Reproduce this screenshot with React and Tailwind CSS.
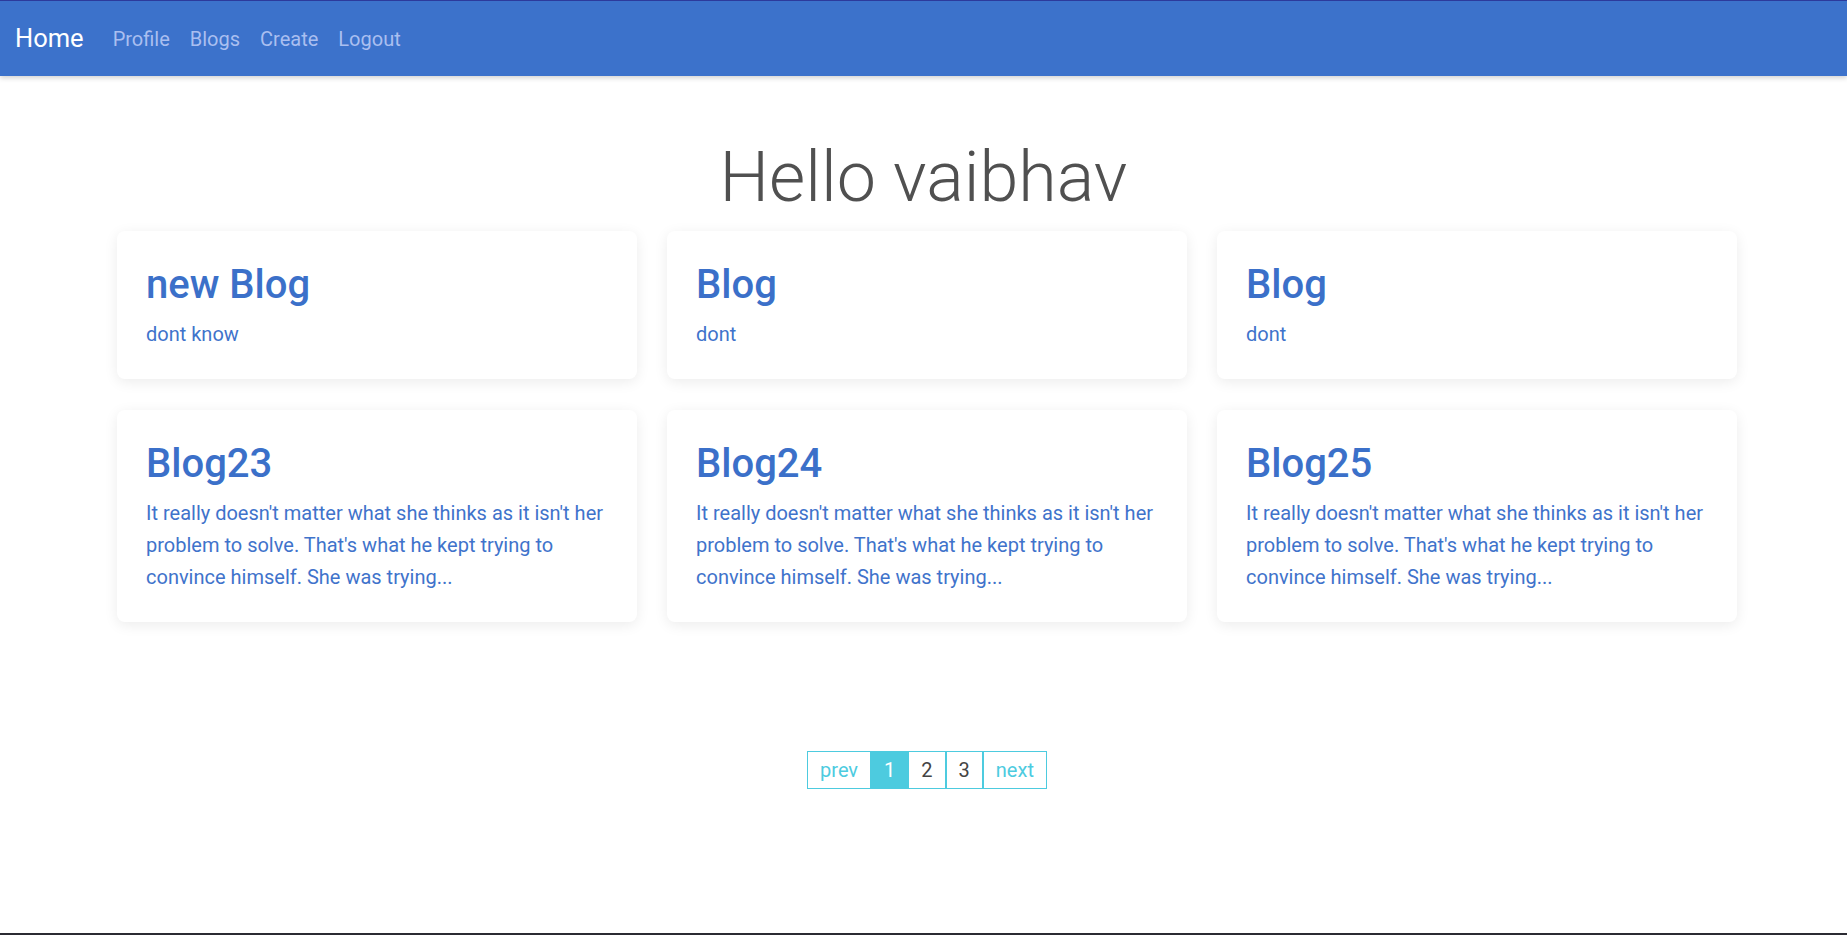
import React from "react";

const blogs = [
  { title: "new Blog", body: "dont know" },
  { title: "Blog", body: "dont" },
  { title: "Blog", body: "dont" },
  {
    title: "Blog23",
    body: "It really doesn't matter what she thinks as it isn't her problem to solve. That's what he kept trying to convince himself. She was trying...",
  },
  {
    title: "Blog24",
    body: "It really doesn't matter what she thinks as it isn't her problem to solve. That's what he kept trying to convince himself. She was trying...",
  },
  {
    title: "Blog25",
    body: "It really doesn't matter what she thinks as it isn't her problem to solve. That's what he kept trying to convince himself. She was trying...",
  },
];

const Navbar = () => (
  <nav className="h-[76px] bg-[#3c72cb] border-t border-[#2c3a9c] shadow-[0_2px_5px_rgba(0,0,0,0.18)] flex items-center relative z-10">
    <a className="ml-[15px] text-[25.5px] text-white">Home</a>
    <ul className="flex items-center ml-[19px]">
      {["Profile", "Blogs", "Create", "Logout"].map((l) => (
        <li key={l} className="px-[10px] text-[20px] text-[#aabff0]">
          {l}
        </li>
      ))}
    </ul>
  </nav>
);

const BlogCard = ({ title, body }) => (
  <div className="bg-white rounded-[8px] p-[29px] shadow-[0_3px_14px_rgba(0,0,0,0.08)]">
    <h2 className="text-[40px] font-medium leading-[49px] text-[#3b70c9] mb-[9px]">{title}</h2>
    <p className="text-[20px] leading-[32px] text-[#3f73cb]">{body}</p>
  </div>
);

const Pagination = () => {
  const items = [
    { label: "prev", cls: "text-[#4dcbdf]" },
    { label: "1", cls: "bg-[#4dcbdf] text-white" },
    { label: "2", cls: "text-[#444]" },
    { label: "3", cls: "text-[#444]" },
    { label: "next", cls: "text-[#4dcbdf]" },
  ];
  return (
    <ul className="flex justify-center mt-[129px]">
      {items.map((it) => (
        <li
          key={it.label}
          className={`border border-[#4dcbdf] px-3 text-[20px] leading-[36px] ${it.cls}`}
        >
          {it.label}
        </li>
      ))}
    </ul>
  );
};

export default function App() {
  return (
    <div className="h-[935px] flex flex-col bg-white font-['Roboto',sans-serif]">
      <Navbar />
      <main className="flex-1">
        <h1 className="mt-[59px] text-center text-[70px] font-light leading-[84px] text-[#505050]">
          Hello vaibhav
        </h1>
        <div className="w-[1620px] ml-[117px] mt-[12px]">
          <div className="grid grid-cols-3 gap-x-[30px] gap-y-[31px]">
            {blogs.map((b, i) => (
              <BlogCard key={i} {...b} />
            ))}
          </div>
          <Pagination />
        </div>
      </main>
      <div className="h-[2px] bg-[#2b2b33]" />
    </div>
  );
}
